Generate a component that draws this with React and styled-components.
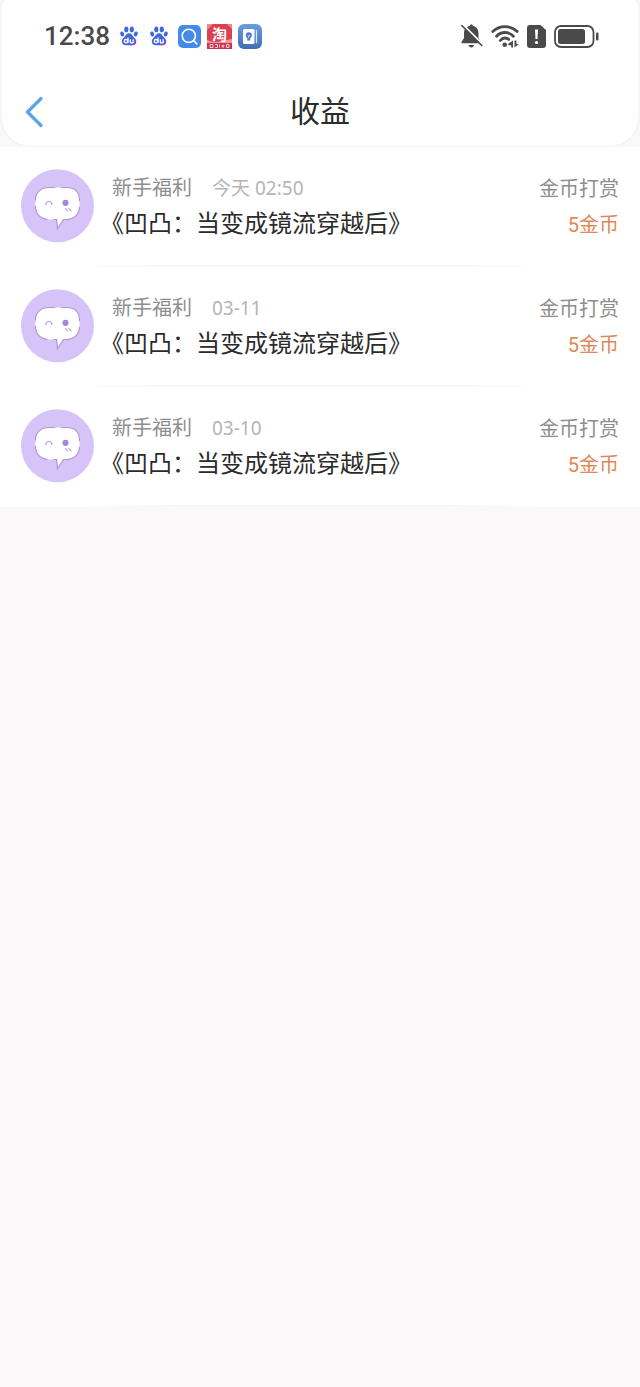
import React from "react";
import styled, { createGlobalStyle } from "styled-components";

const GlobalStyle = createGlobalStyle`
  * {
    box-sizing: border-box;
  }
  body {
    margin: 0;
    min-height: 100vh;
    background: #faf8f9;
    color: #2b2b2b;
    font-family: Roboto, "Noto Sans CJK SC", sans-serif;
  }
`;

const Header = styled.header`
  margin: 0 2px 1px;
  padding-top: 2px;
  background: #fff;
  border-radius: 4px 4px 28px 28px;
  box-shadow: 0 0 2px 1px #f2f0f1;
`;

const StatusBar = styled.div`
  display: flex;
  align-items: center;
  justify-content: space-between;
  height: 68px;
  padding: 0 39px 0 42px;
`;

const StatusGroup = styled.div`
  display: flex;
  align-items: center;
  gap: ${(props) => props.$gap}px;
`;

const Clock = styled.time`
  width: 66px;
  color: #4a4a4a;
  font-size: 26px;
  font-weight: 500;
  line-height: 32px;
`;

const TitleBar = styled.div`
  display: grid;
  grid-template-columns: 64px 1fr 64px;
  align-items: center;
  height: 76px;
  padding-top: 8px;
`;

const BackButton = styled.button`
  display: flex;
  align-items: center;
  height: 48px;
  padding: 0 0 0 20px;
  border: 0;
  background: none;
  cursor: pointer;
`;

const Title = styled.h1`
  margin: 0;
  font-size: 30px;
  font-weight: 400;
  line-height: 44px;
  text-align: center;
`;

const List = styled.ul`
  margin: 0;
  padding: 0;
  list-style: none;
  background: #fff;
`;

const Row = styled.li`
  display: flex;
  height: 120px;
  padding: 22px 21px 0;
  background: linear-gradient(
      90deg,
      transparent 12%,
      #f7f6f6 28%,
      #f7f6f6 70%,
      transparent 85%
    )
    bottom / 100% 2px no-repeat;
`;

const Details = styled.div`
  flex: 1;
  min-width: 0;
  margin-left: 17px;
  padding-top: 1px;
`;

const Meta = styled.div`
  display: flex;
  gap: 20px;
  font-size: 20px;
  line-height: 36px;
  color: #8e8e8e;
`;

const When = styled.time`
  color: #b5b5b5;
  font-family: "Noto Sans", "Noto Sans CJK SC", sans-serif;
  font-size: 19px;
`;

const Book = styled.div`
  font-size: 24px;
  line-height: 36px;
  white-space: nowrap;
  text-spacing-trim: trim-start;
`;

const Reward = styled.div`
  padding-top: 2px;
  font-size: 20px;
  line-height: 36px;
  text-align: right;
  color: #8e8e8e;
`;

const Amount = styled.div`
  color: #df8756;
`;

function PawIcon() {
  return (
    <svg width="18" height="20" viewBox="0 0 18 20">
      <g fill="#3f68dc">
        <ellipse cx="6.3" cy="3.4" rx="2.1" ry="2.9" />
        <ellipse cx="11.8" cy="3.4" rx="2.1" ry="2.9" />
        <ellipse cx="2.2" cy="8" rx="1.9" ry="2.5" transform="rotate(-18 2.2 8)" />
        <ellipse cx="15.8" cy="8" rx="1.9" ry="2.5" transform="rotate(18 15.8 8)" />
        <path d="M9 7.2c2.4 0 3.2 2 4.7 3.7 1.8 1.7 2.8 3 2.4 5.4-.4 2.2-2.2 3.2-4.2 3H6.1c-2 .2-3.8-.8-4.2-3-.4-2.4.6-3.7 2.4-5.4C5.8 9.2 6.6 7.2 9 7.2z" />
      </g>
      <path d="M10 19.3h2c2.2.1 3.8-1 4.2-3 .1-1 0-1.8-.3-2.5z" fill="#8a48d8" />
      <g fill="none" stroke="#fff" strokeWidth="1.3">
        <circle cx="6" cy="15.2" r="1.7" />
        <path d="M8 11.5v5.6M10.3 13.3v2.4q0 1.3 1.4 1.3t1.5-1.3v-2.4v3.8" />
      </g>
    </svg>
  );
}

function SearchAppIcon() {
  return (
    <svg width="23" height="23" viewBox="0 0 23 23">
      <rect width="23" height="23" rx="5" fill="#438ae9" />
      <circle cx="10.8" cy="10.8" r="6.6" fill="none" stroke="#fff" strokeWidth="1.6" />
      <path d="M15.5 15.5l3.3 3.3" stroke="#fff" strokeWidth="1.7" strokeLinecap="round" />
    </svg>
  );
}

function TaobaoIcon() {
  return (
    <svg width="25" height="25" viewBox="0 0 25 25">
      <rect width="25" height="25" fill="#dc4053" />
      <path d="M0 0h6L0 6zM20 0h5v5z" fill="#ee8792" />
      <path d="M0 16q5 3 12 1.5T25 15v4H0z" fill="#ef9a95" />
      <path d="M0 19h25v6H0z" fill="#c93550" />
      <text
        x="12.5"
        y="16"
        fontSize="15"
        fontWeight="700"
        textAnchor="middle"
        fill="#fff"
        fontFamily="Noto Sans CJK SC, sans-serif"
      >
        淘
      </text>
      <path
        d="M3 20.5v3h3v-3zM8 20.5h2.5v3H8M12.5 20.5v3M14.5 22h3M16 20.5v3.5M19.5 20.5h2.5v3h-2.5z"
        fill="none"
        stroke="#f7ccd2"
        strokeWidth="1"
      />
    </svg>
  );
}

function NotebookIcon() {
  return (
    <svg width="24" height="25" viewBox="0 0 24 25">
      <defs>
        <linearGradient id="notebook" x1="0" y1="0" x2="0" y2="1">
          <stop offset="0" stopColor="#6a9ce0" />
          <stop offset="1" stopColor="#416fb7" />
        </linearGradient>
      </defs>
      <rect width="24" height="25" rx="6" fill="url(#notebook)" />
      <rect x="5" y="5" width="11.5" height="15" rx="1.5" fill="#fff" />
      <path d="M18.5 6.5v12" stroke="#d6e3f7" strokeWidth="1.3" strokeLinecap="round" />
      <circle cx="10.8" cy="11.3" r="3" fill="#4b7cc4" />
      <path d="M9.3 13h3v3.5h-3z" fill="#4b7cc4" />
      <path d="M9.7 11l1.1 1.2 1.1-1.2M10.8 12.2v2" stroke="#fff" strokeWidth=".7" fill="none" />
    </svg>
  );
}

function MutedIcon() {
  return (
    <svg width="22" height="24" viewBox="0 0 22 24">
      <path
        d="M10.3.5c1 0 1.7.7 1.7 1.6 3.5.7 5.5 3.5 5.5 7v5l2.5 4v1.2H.5V18L3 14V9.1c0-3.5 2.1-6.3 5.6-7C8.6 1.2 9.3.5 10.3.5zM7.5 21h5.6c-.3 1.5-1.5 2.4-2.8 2.4S7.8 22.5 7.5 21z"
        fill="#4a4a4a"
      />
      <path d="M1.8.5l20 20" stroke="#fff" strokeWidth="2" />
      <path d="M.8 1.5l20 20" stroke="#4a4a4a" strokeWidth="1.6" strokeLinecap="round" />
    </svg>
  );
}

function WifiIcon() {
  return (
    <svg width="28" height="23" viewBox="0 0 28 23">
      <g fill="none" stroke="#4a4a4a" strokeWidth="2.8" strokeLinecap="round">
        <path d="M1.8 6.6Q7 1.6 14 1.6t12.2 5" />
        <path d="M5.6 11.2Q9 7.5 14 7.5t8.4 3.7" />
        <path d="M9.3 15.5Q11.3 13 14 13q2 0 3.7 1.3" />
      </g>
      <circle cx="13.7" cy="19.8" r="2.3" fill="#4a4a4a" />
      <path d="M22 15.5v7h-1.8v-2.2h-2.9v-1.5zM23.5 15.5v7l4.3-3.4h-2.4v-3.6z" fill="#4a4a4a" />
    </svg>
  );
}

function SimIcon() {
  return (
    <svg width="19" height="23" viewBox="0 0 19 23">
      <path d="M3 0h10.5L19 5v15a3 3 0 0 1-3 3H3a3 3 0 0 1-3-3V3a3 3 0 0 1 3-3z" fill="#4a4a4a" />
      <path d="M8 4.5h3l-.5 9.5H8.5z" fill="#fff" />
      <circle cx="9.5" cy="17.5" r="1.6" fill="#fff" />
    </svg>
  );
}

function BatteryIcon() {
  return (
    <svg width="45" height="23" viewBox="0 0 45 23">
      <rect x="1" y="1" width="38.5" height="21" rx="6" fill="none" stroke="#4a4a4a" strokeWidth="1.8" />
      <rect x="4" y="4" width="27" height="15" rx="2.5" fill="#4a4a4a" />
      <rect x="42" y="7.5" width="2.5" height="8" rx="1" fill="#4a4a4a" />
    </svg>
  );
}

function BackIcon() {
  return (
    <svg width="24" height="32" viewBox="0 0 24 32">
      <path
        d="M19 2.5L5.5 16 19 29.5"
        fill="none"
        stroke="#5aa3e6"
        strokeWidth="3.2"
        strokeLinecap="round"
        strokeLinejoin="round"
      />
    </svg>
  );
}

function Avatar() {
  return (
    <svg width="74" height="74" viewBox="0 0 74 74">
      <circle cx="36.5" cy="36.8" r="36.5" fill="#d6c4f8" />
      <path
        d="M28 18.5h18c8 0 12.5 5 12.5 12V37c0 8-5.5 13.5-14.5 13.5h-1.5l-6 9-.8-9H29C20 50.5 14.5 45 14.5 37v-6.5c0-7 5.5-12 13.5-12z"
        fill="#fff"
      />
      <g fill="none" stroke="#ad96d8" strokeWidth="1.2">
        <path d="M14.5 31.5v-1c0-7 5.5-12 13.5-12h6" />
        <path d="M40 18.5h6c8 0 12.5 5 12.5 12V32" />
        <path d="M58.5 38c-.5 8-6 12.5-14.5 12.5h-1.5l-6 9-.8-9h-3.2" />
        <path d="M26.5 50.5C19 49.5 14.5 44.5 14.5 37" />
      </g>
      <path d="M24.7 35.5c.3-4 6-4 6.3 0" fill="none" stroke="#b29ade" strokeWidth="1.2" strokeLinecap="round" />
      <circle cx="44.5" cy="33.8" r="3.1" fill="#a488d9" />
      <path d="M44.5 39.5l2 2.3M48 39.5l2 2.3" stroke="#b29ade" strokeWidth="1.1" strokeLinecap="round" />
    </svg>
  );
}

const records = [
  { id: 1, when: "今天 02:50" },
  { id: 2, when: "03-11" },
  { id: 3, when: "03-10" },
];

export default function App() {
  return (
    <>
      <GlobalStyle />
      <Header>
        <StatusBar>
          <StatusGroup $gap={10}>
            <Clock>12:38</Clock>
            <StatusGroup $gap={12}>
              <PawIcon />
              <PawIcon />
            </StatusGroup>
            <StatusGroup $gap={6}>
              <SearchAppIcon />
              <TaobaoIcon />
              <NotebookIcon />
            </StatusGroup>
          </StatusGroup>
          <StatusGroup $gap={8}>
            <MutedIcon />
            <WifiIcon />
            <SimIcon />
            <BatteryIcon />
          </StatusGroup>
        </StatusBar>
        <TitleBar>
          <BackButton aria-label="返回">
            <BackIcon />
          </BackButton>
          <Title>收益</Title>
        </TitleBar>
      </Header>
      <List>
        {records.map((record) => (
          <Row key={record.id}>
            <Avatar />
            <Details>
              <Meta>
                <span>新手福利</span>
                <When>{record.when}</When>
              </Meta>
              <Book>《凹凸：当变成镜流穿越后》</Book>
            </Details>
            <Reward>
              <div>金币打赏</div>
              <Amount>5金币</Amount>
            </Reward>
          </Row>
        ))}
      </List>
    </>
  );
}
